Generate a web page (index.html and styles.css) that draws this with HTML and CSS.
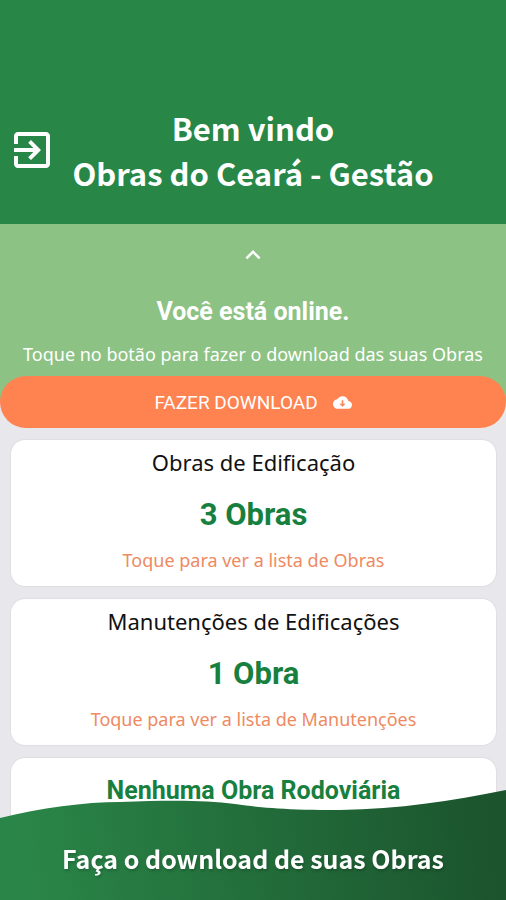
FILE: index.html
```html
<!DOCTYPE html>
<html lang="pt-BR">
<head>
	<meta charset="UTF-8">
	<meta name="viewport" content="width=device-width, initial-scale=1">
	<title>Obras do Ceará - Gestão</title>
	<link rel="stylesheet" href="styles.css">
</head>
<body>
	<header class="header">
		<button class="exit" type="button" aria-label="Sair">
			<svg viewBox="0 0 24 24"><path d="M10.09 15.59L11.5 17l5-5-5-5-1.41 1.41L12.67 11H3v2h9.67l-2.58 2.59zM19 3H5c-1.11 0-2 .9-2 2v4h2V5h14v14H5v-4H3v4c0 1.1.89 2 2 2h14c1.1 0 2-.9 2-2V5c0-1.1-.9-2-2-2z"/></svg>
		</button>
		<h1 class="title">Bem vindo<br>Obras do Ceará - Gestão</h1>
	</header>
	<section class="status">
		<button class="toggle" type="button" aria-label="Recolher">
			<svg viewBox="0 0 24 24"><path d="M12 8l-6 6 1.41 1.41L12 10.83l4.59 4.58L18 14z"/></svg>
		</button>
		<h2 class="online">Você está online.</h2>
		<p class="hint">Toque no botão para fazer o download das suas Obras</p>
		<button class="download" type="button">
			FAZER DOWNLOAD
			<svg viewBox="0 0 24 24"><path fill-rule="evenodd" d="M19.35 10.04C18.67 6.59 15.64 4 12 4 9.11 4 6.6 5.64 5.35 8.04 2.34 8.36 0 10.91 0 14c0 3.31 2.69 6 6 6h13c2.76 0 5-2.24 5-5 0-2.64-2.05-4.78-4.65-4.96zM13 9h-2v4.500H8l4 4 4-4h-3z"/></svg>
		</button>
	</section>
	<main class="list">
		<a class="card" href="#obras">
			<span class="name">Obras de Edificação</span>
			<strong class="count">3 Obras</strong>
			<span class="more">Toque para ver a lista de Obras</span>
		</a>
		<a class="card" href="#manutencoes">
			<span class="name">Manutenções de Edificações</span>
			<strong class="count">1 Obra</strong>
			<span class="more">Toque para ver a lista de Manutenções</span>
		</a>
		<div class="card">
			<strong class="empty">Nenhuma Obra Rodoviária</strong>
		</div>
	</main>
	<footer class="footer">
		<svg class="wave" viewBox="0 0 506 110" preserveAspectRatio="none">
			<defs>
				<linearGradient id="green" gradientUnits="userSpaceOnUse" x1="20" y1="70" x2="490" y2="20">
					<stop offset="0" stop-color="#2a8648"/>
					<stop offset="1" stop-color="#1b542d"/>
				</linearGradient>
			</defs>
			<path fill="url(#green)" d="M0 28C40 18 85 12 120 12C170 10 205 10 235 14C265 18 285 20 340 20C400 19 450 11 506 0V110H0z"/>
		</svg>
		<p class="caption">Faça o download de suas Obras</p>
	</footer>
</body>
</html>
```

FILE: styles.css
```css
*{
	box-sizing: border-box;
}
body{
	margin: 0;
	min-height: 100vh;
	background: #e8e8ec;
	font-family: "Noto Sans", sans-serif;
	text-align: center;
}
h1,h2,p{
	margin: 0;
}
button{
	border: 0;
	padding: 0;
	background: none;
	color: white;
	cursor: pointer;
}
svg{
	display: block;
	fill: currentColor;
}
.header{
	display: grid;
	grid-template-columns: 1fr auto 1fr;
	align-items: center;
	padding: 105px 8px 29px;
	background: #288746;
	color: white;
}
.exit{
	justify-self: start;
}
.exit svg{
	width: 48px;
	height: 48px;
}
.title{
	font: bold 31px/45px "Noto Sans CJK SC", sans-serif;
}
.status{
	display: flex;
	flex-direction: column;
	align-items: center;
	padding-top: 16px;
	background: #8cc284;
	color: white;
}
.toggle svg{
	width: 30px;
	height: 30px;
}
.online{
	margin-top: 26px;
	font: bold 25px/32px Roboto, sans-serif;
}
.hint{
	margin: 14px 0 10px;
	font-size: 18px;
	line-height: 24px;
}
.download{
	display: flex;
	align-items: center;
	justify-content: center;
	gap: 15px;
	width: 100%;
	height: 52px;
	margin-bottom: -26px;
	border-radius: 26px;
	background: #ff8350;
	font: 19px Roboto, sans-serif;
}
.download svg{
	width: 19px;
	height: 19px;
}
.list{
	display: flex;
	flex-direction: column;
	gap: 13px;
	padding: 38px 10px 0 11px;
}
.card{
	display: flex;
	flex-direction: column;
	padding: 8px 16px 13px;
	border-radius: 14px;
	background: white;
	box-shadow: 0 0 2px rgba(0,0,0,0.12);
	text-decoration: none;
}
.name{
	color: #111;
	font-size: 22px;
	line-height: 28px;
}
.count{
	margin: 20px 0 13px;
	color: #17803f;
	font: bold 31px/38px Roboto, sans-serif;
}
.more{
	color: #ee8a62;
	font-size: 18px;
	line-height: 26px;
}
.empty{
	padding: 9px 0;
	color: #17803f;
	font: bold 25px/32px Roboto, sans-serif;
}
.footer{
	position: fixed;
	left: 0;
	right: 0;
	bottom: 0;
	display: grid;
	color: white;
}
.wave{
	grid-area: 1 / 1;
	width: 100%;
	height: 110px;
}
.caption{
	grid-area: 1 / 1;
	align-self: end;
	padding-bottom: 22px;
	font: bold 25px/40px "Noto Sans CJK SC", sans-serif;
	text-shadow: 1px 2px 3px rgba(0,0,0,0.2);
}
```
